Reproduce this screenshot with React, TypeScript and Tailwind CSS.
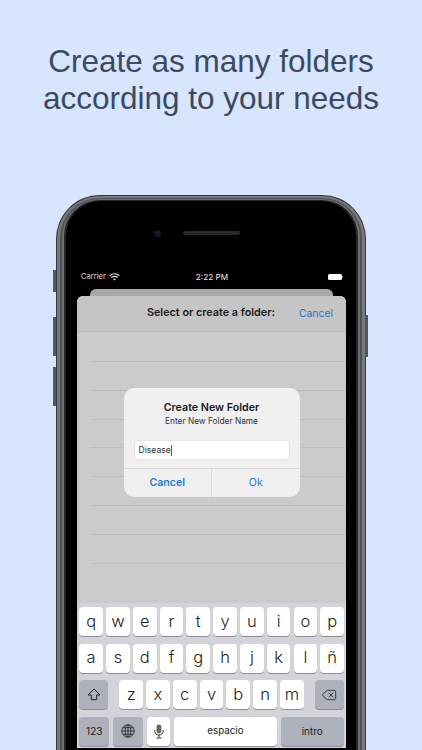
import { Delete } from "lucide-react";

const topRow = ["q", "w", "e", "r", "t", "y", "u", "i", "o", "p"];
const midRow = ["a", "s", "d", "f", "g", "h", "j", "k", "l", "ñ"];
const lowRow = ["z", "x", "c", "v", "b", "n", "m"];

const keyShadow = "shadow-[0_1px_0_#8e9096]";

function LetterKey({ label }: { label: string }) {
  return (
    <div
      className={`flex h-[29px] w-[23.7px] shrink-0 items-center justify-center rounded-[4px] bg-white pb-[1px] text-[16.5px] font-light text-[#222] ${keyShadow}`}
    >
      {label}
    </div>
  );
}

function WifiIcon() {
  return (
    <svg width="11" height="8" viewBox="0 0 11 8" fill="none" stroke="#d8d8d8" strokeWidth="1.3">
      <path d="M0.7 2.8C3.5 0.2 7.5 0.2 10.3 2.8" />
      <path d="M2.3 4.5C4 3 7 3 8.7 4.5" />
      <path d="M5.5 7.6L3.9 6C4.8 5.3 6.2 5.3 7.1 6Z" fill="#d8d8d8" stroke="none" />
    </svg>
  );
}

function ShiftIcon() {
  return (
    <svg width="14" height="13" viewBox="0 0 14 13" fill="none" stroke="#222" strokeWidth="1" strokeLinejoin="round">
      <path d="M7 1L13 7H9.7V11.7H4.3V7H1Z" />
    </svg>
  );
}

function GlobeIcon() {
  return (
    <svg width="14" height="14" viewBox="0 0 14 14" fill="none" stroke="#2a2a2a" strokeWidth="0.9">
      <circle cx="7" cy="7" r="6.2" />
      <ellipse cx="7" cy="7" rx="2.9" ry="6.2" />
      <path d="M7 0.8V13.2M0.8 7H13.2M1.7 3.8H12.3M1.7 10.2H12.3" />
    </svg>
  );
}

function MicIcon() {
  return (
    <svg width="10" height="15" viewBox="0 0 10 15" fill="none" stroke="#333" strokeWidth="1">
      <rect x="2.6" y="0.5" width="4.8" height="9" rx="2.4" fill="#666" stroke="none" />
      <path d="M0.8 6.2V7.2C0.8 9.6 2.7 11 5 11C7.3 11 9.2 9.6 9.2 7.2V6.2" />
      <path d="M5 11V13.6M2.6 14H7.4" />
    </svg>
  );
}

function PhoneButton({ className }: { className: string }) {
  return <div className={`absolute w-[3px] bg-[#55565a] ${className}`} />;
}

export default function App() {
  return (
    <div className="h-[750px] w-[422px] overflow-hidden bg-[#d7e5ff] font-['Liberation_Sans',sans-serif]">
      <h1 className="pt-[43px] text-center text-[31.5px] leading-[37px] font-normal text-[#3b4a60]">
        Create as many folders
        <br />
        according to your needs
      </h1>

      <div className="relative mt-[78px] ml-[56px] w-[310px]">
        <PhoneButton className="top-[75px] -left-[3px] h-[22px]" />
        <PhoneButton className="top-[122px] -left-[3px] h-[39px]" />
        <PhoneButton className="top-[172px] -left-[3px] h-[39px]" />
        <PhoneButton className="top-[120px] -right-[2px] h-[42px]" />

        {/* frame bands, dark edge then steel then black bezel */}
        <div className="rounded-t-[44px] bg-[#35363a] px-[1px] pt-[1px]">
          <div className="rounded-t-[43px] bg-[#77787c] px-[3px] pt-[2px]">
            <div className="rounded-t-[40px] bg-[#505155] px-[2px] pt-[1px]">
              <div className="rounded-t-[38px] bg-[#6e6f73] px-[2px] pt-[1px]">
                <div className="rounded-t-[36px] bg-[#252629] px-[2px] pt-[1px]">
                  <div className="h-[560px] rounded-t-[35px] bg-black pr-[10px] pl-[11px]">
                    <div className="relative flex h-[20px] justify-center pt-[30px]">
                      <div className="absolute top-[29px] left-[77px] h-[7px] w-[7px] rounded-full bg-[#10182c]" />
                      <div className="h-[4px] w-[57px] rounded-full bg-[#26272a]" />
                    </div>

                    {/* status bar */}
                    <div className="mt-[40px] flex h-[12px] items-center justify-between pr-[3px] pl-[4px] font-['Inter',sans-serif] text-[7.6px] text-[#d8d8d8]">
                      <div className="flex w-[60px] items-center gap-[3px]">
                        Carrier
                        <WifiIcon />
                      </div>
                      <div className="text-[8.2px] text-[#e8e8e8]">2:22 PM</div>
                      <div className="flex w-[60px] items-center justify-end gap-[0.5px]">
                        <div className="h-[6px] w-[14px] rounded-[1.5px] bg-white" />
                        <div className="h-[2px] w-[1px] rounded-r-[1px] bg-[#8a8a8a]" />
                      </div>
                    </div>

                    {/* sheet stack */}
                    <div className="mx-[13px] mt-[6px] h-[7px] rounded-t-[6px] bg-[#a9a9a9]" />
                    <div className="relative flex h-[452px] flex-col overflow-hidden rounded-t-[6px] bg-[#cbcbcb] font-['Inter',sans-serif]">
                      <div className="flex h-[36px] shrink-0 items-center justify-end border-b border-[#b7b7b7] bg-[#c5c5c5]">
                        <span className="mr-[24px] text-[10.8px] font-semibold text-[#1c1c1c]">
                          Select or create a folder:
                        </span>
                        <span className="mr-[13px] text-[10.4px] text-[#2e73c4]">Cancel</span>
                      </div>

                      <div className="flex flex-1 flex-col pt-[29px] pl-[13px]">
                        {Array.from({ length: 8 }).map((_, i) => (
                          <div key={i} className="h-[28.8px] shrink-0 border-t border-[#bdbdbd]" />
                        ))}
                      </div>

                      {/* alert */}
                      <div className="absolute top-[92px] left-[46.5px] flex h-[109px] w-[176px] flex-col rounded-[10px] bg-[#f0f0f0]">
                        <div className="pt-[12px] text-center text-[10.7px] leading-[15px] font-semibold text-[#1a1a1a]">
                          Create New Folder
                        </div>
                        <div className="text-center text-[8.3px] leading-[13px] text-[#333]">
                          Enter New Folder Name
                        </div>
                        <div className="mx-[10px] mt-[12px] flex h-[20px] items-center rounded-[4px] border border-[#e6e6e6] bg-white pl-[4px] text-[8.6px] text-[#333]">
                          Disease
                          <span className="h-[11px] w-[1px] bg-[#2a62c8]" />
                        </div>
                        <div className="mt-[8px] flex flex-1 border-t border-[#d9d9d9] text-[10.6px] text-[#1f7ae0]">
                          <div className="flex flex-1 items-center justify-center border-r border-[#d9d9d9] font-semibold">
                            Cancel
                          </div>
                          <div className="flex flex-1 items-center justify-center">Ok</div>
                        </div>
                      </div>

                      {/* keyboard */}
                      <div className="absolute top-[307px] right-0 left-0 flex h-[145px] flex-col gap-[7.5px] bg-[#d2d4da] px-[2.3px] pt-[4px]">
                        <div className="flex gap-[3.1px]">
                          {topRow.map((k) => (
                            <LetterKey key={k} label={k} />
                          ))}
                        </div>
                        <div className="flex gap-[3.1px]">
                          {midRow.map((k) => (
                            <LetterKey key={k} label={k} />
                          ))}
                        </div>
                        <div className="flex justify-between">
                          <div className={`flex h-[29px] w-[29px] items-center justify-center rounded-[4px] bg-[#adb1bb] ${keyShadow}`}>
                            <ShiftIcon />
                          </div>
                          <div className="flex gap-[3.1px]">
                            {lowRow.map((k) => (
                              <LetterKey key={k} label={k} />
                            ))}
                          </div>
                          <div className={`flex h-[29px] w-[29px] items-center justify-center rounded-[4px] bg-[#adb1bb] ${keyShadow}`}>
                            <Delete size={16} strokeWidth={1.2} color="#222" />
                          </div>
                        </div>
                        <div className="flex gap-[4px]">
                          <div className={`flex h-[29px] w-[30px] items-center justify-center rounded-[4px] bg-[#adb1bb] text-[10px] text-[#222] ${keyShadow}`}>
                            123
                          </div>
                          <div className={`flex h-[29px] w-[30px] items-center justify-center rounded-[4px] bg-[#adb1bb] ${keyShadow}`}>
                            <GlobeIcon />
                          </div>
                          <div className={`flex h-[29px] w-[23px] items-center justify-center rounded-[4px] bg-white ${keyShadow}`}>
                            <MicIcon />
                          </div>
                          <div className={`flex h-[29px] w-[103px] items-center justify-center rounded-[4px] bg-white text-[9.8px] text-[#222] ${keyShadow}`}>
                            espacio
                          </div>
                          <div className={`flex h-[29px] w-[63px] items-center justify-center rounded-[4px] bg-[#adb1bb] text-[10px] text-[#222] ${keyShadow}`}>
                            intro
                          </div>
                        </div>
                      </div>
                    </div>
                  </div>
                </div>
              </div>
            </div>
          </div>
        </div>
      </div>
    </div>
  );
}
